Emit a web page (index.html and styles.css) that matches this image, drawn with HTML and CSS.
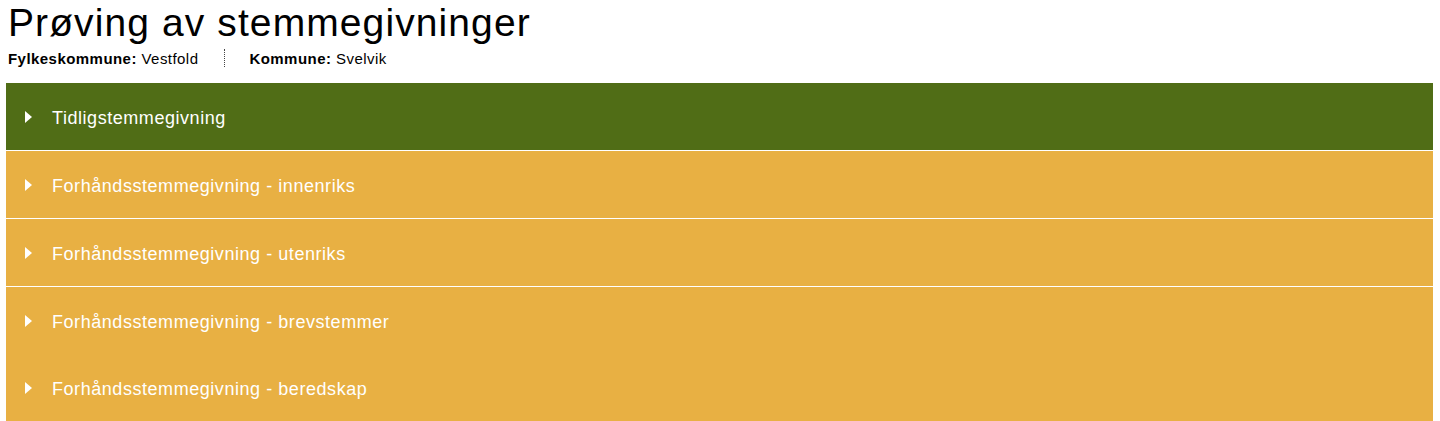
FILE: index.html
```html
<!DOCTYPE html>
<html lang="no">
<head>
    <meta charset="UTF-8">
    <title>Prøving av stemmegivninger</title>
    <link rel="stylesheet" href="styles.css">
</head>
<body>
    <div class="page">
        <h1 class="title">Prøving av stemmegivninger</h1>
        <div class="meta">
            <span class="meta-item"><b>Fylkeskommune:</b> Vestfold</span>
            <span class="meta-sep"></span>
            <span class="meta-item"><b>Kommune:</b> Svelvik</span>
        </div>

        <div class="panels">
            <div class="panel panel-active">
                <span class="caret"></span>
                <span class="panel-title">Tidligstemmegivning</span>
            </div>
            <div class="panel">
                <span class="caret"></span>
                <span class="panel-title">Forhåndsstemmegivning - innenriks</span>
            </div>
            <div class="panel">
                <span class="caret"></span>
                <span class="panel-title">Forhåndsstemmegivning - utenriks</span>
            </div>
            <div class="panel panel-flush">
                <span class="caret"></span>
                <span class="panel-title">Forhåndsstemmegivning - brevstemmer</span>
            </div>
            <div class="panel panel-flush">
                <span class="caret"></span>
                <span class="panel-title">Forhåndsstemmegivning - beredskap</span>
            </div>
        </div>
    </div>
</body>
</html>
```

FILE: styles.css
```css
* {
    margin: 0;
    padding: 0;
    box-sizing: border-box;
}

body {
    font-family: 'Liberation Sans', Arial, sans-serif;
    background: #fff;
    color: #000;
}

.page {
    padding: 0 7px 0 6px;
}

.title {
    font-size: 39px;
    font-weight: normal;
    letter-spacing: 1.1px;
    line-height: 44px;
    padding-left: 2px;
    margin-top: 1px;
}

.meta {
    display: flex;
    align-items: center;
    font-size: 15px;
    letter-spacing: 0.45px;
    padding-left: 2px;
    height: 26px;
    margin-bottom: 12px;
}

.meta-item b {
    font-weight: bold;
}

.meta-sep {
    width: 0;
    height: 18px;
    border-left: 1px dotted #444;
    margin: 0 24px 0 26px;
}

.panels {
    display: flex;
    flex-direction: column;
}

.panel {
    display: flex;
    align-items: center;
    height: 68px;
    padding-top: 3px;
    background: #e8b043;
    border-bottom: 1px solid #fff;
    color: #fff;
    font-size: 18px;
    letter-spacing: 0.55px;
    padding-left: 19px;
}

.panel-active {
    background: #506d16;
}

.panel-flush {
    height: 67px;
    border-bottom: none;
}

.caret {
    width: 0;
    height: 0;
    margin-top: -2px;
    border-top: 6px solid transparent;
    border-bottom: 6px solid transparent;
    border-left: 7px solid #fff;
    margin-right: 20px;
}
```
